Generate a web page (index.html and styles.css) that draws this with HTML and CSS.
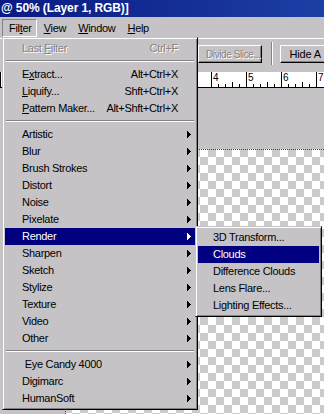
FILE: index.html
```html
<!DOCTYPE html>
<html lang="en">
<head>
  <meta charset="utf-8">
  <title>Filter menu</title>
  <link rel="stylesheet" href="styles.css">
</head>
<body>
<div class="window">
  <div class="titlebar">@ 50% (Layer 1, RGB)]</div>

  <div class="menubar">
    <span class="menubar-item open">Fil<u>t</u>er</span>
    <span class="menubar-item"><u>V</u>iew</span>
    <span class="menubar-item"><u>W</u>indow</span>
    <span class="menubar-item"><u>H</u>elp</span>
  </div>

  <div class="toolbar">
    <button class="tool-btn divide" disabled>Divide Slice...</button>
    <span class="tool-sep"></span>
    <button class="tool-btn hide">Hide A</button>
  </div>

  <div class="ruler">
    <svg width="324" height="16" viewBox="0 0 324 16">
      <rect x="0" y="0" width="324" height="16" fill="#fff"/>
      <g fill="#000">
        <rect x="0" y="0" width="1" height="16"/>
        <rect x="36" y="0" width="1" height="16"/>
        <rect x="71" y="0" width="1" height="16"/>
        <rect x="106" y="0" width="1" height="16"/>
        <rect x="141" y="0" width="1" height="16"/>
        <rect x="176" y="0" width="1" height="16"/>
        <rect x="211" y="0" width="1" height="16"/>
        <rect x="246" y="0" width="1" height="16"/>
        <rect x="281" y="0" width="1" height="16"/>
        <rect x="316" y="0" width="1" height="16"/>
        <rect x="218" y="12" width="1" height="3"/>
        <rect x="225" y="12" width="1" height="3"/>
        <rect x="232" y="10" width="1" height="5"/>
        <rect x="239" y="12" width="1" height="3"/>
        <rect x="253" y="12" width="1" height="3"/>
        <rect x="260" y="12" width="1" height="3"/>
        <rect x="267" y="10" width="1" height="5"/>
        <rect x="274" y="12" width="1" height="3"/>
        <rect x="288" y="12" width="1" height="3"/>
        <rect x="295" y="12" width="1" height="3"/>
        <rect x="302" y="10" width="1" height="5"/>
        <rect x="309" y="12" width="1" height="3"/>
        <rect x="0" y="15" width="324" height="1"/>
      </g>
      <g class="ruler-nums">
        <text x="213" y="9">4</text>
        <text x="248" y="9">5</text>
        <text x="283" y="9">6</text>
        <text x="318" y="9">7</text>
      </g>
    </svg>
  </div>

  <div class="workspace">
    <div class="canvas"></div>
  </div>

  <!-- Filter dropdown -->
  <ul class="menu filter-menu">
    <li class="item disabled"><span class="label">Last <u>F</u>ilter</span><span class="shortcut">Ctrl+F</span></li>
    <li class="sep"></li>
    <li class="item"><span class="label">E<u>x</u>tract...</span><span class="shortcut">Alt+Ctrl+X</span></li>
    <li class="item"><span class="label"><u>L</u>iquify...</span><span class="shortcut">Shft+Ctrl+X</span></li>
    <li class="item"><span class="label"><u>P</u>attern Maker...</span><span class="shortcut">Alt+Shft+Ctrl+X</span></li>
    <li class="sep"></li>
    <li class="item sub"><span class="label">Artistic</span><svg class="arrow" width="4" height="7" viewBox="0 0 4 7"><path d="M0 0h1v7h-1zM1 1h1v5h-1zM2 2h1v3h-1zM3 3h1v1h-1z"/></svg></li>
    <li class="item sub"><span class="label">Blur</span><svg class="arrow" width="4" height="7" viewBox="0 0 4 7"><path d="M0 0h1v7h-1zM1 1h1v5h-1zM2 2h1v3h-1zM3 3h1v1h-1z"/></svg></li>
    <li class="item sub"><span class="label">Brush Strokes</span><svg class="arrow" width="4" height="7" viewBox="0 0 4 7"><path d="M0 0h1v7h-1zM1 1h1v5h-1zM2 2h1v3h-1zM3 3h1v1h-1z"/></svg></li>
    <li class="item sub"><span class="label">Distort</span><svg class="arrow" width="4" height="7" viewBox="0 0 4 7"><path d="M0 0h1v7h-1zM1 1h1v5h-1zM2 2h1v3h-1zM3 3h1v1h-1z"/></svg></li>
    <li class="item sub"><span class="label">Noise</span><svg class="arrow" width="4" height="7" viewBox="0 0 4 7"><path d="M0 0h1v7h-1zM1 1h1v5h-1zM2 2h1v3h-1zM3 3h1v1h-1z"/></svg></li>
    <li class="item sub"><span class="label">Pixelate</span><svg class="arrow" width="4" height="7" viewBox="0 0 4 7"><path d="M0 0h1v7h-1zM1 1h1v5h-1zM2 2h1v3h-1zM3 3h1v1h-1z"/></svg></li>
    <li class="item sub active"><span class="label">Render</span><svg class="arrow" width="4" height="7" viewBox="0 0 4 7"><path d="M0 0h1v7h-1zM1 1h1v5h-1zM2 2h1v3h-1zM3 3h1v1h-1z"/></svg></li>
    <li class="item sub"><span class="label">Sharpen</span><svg class="arrow" width="4" height="7" viewBox="0 0 4 7"><path d="M0 0h1v7h-1zM1 1h1v5h-1zM2 2h1v3h-1zM3 3h1v1h-1z"/></svg></li>
    <li class="item sub"><span class="label">Sketch</span><svg class="arrow" width="4" height="7" viewBox="0 0 4 7"><path d="M0 0h1v7h-1zM1 1h1v5h-1zM2 2h1v3h-1zM3 3h1v1h-1z"/></svg></li>
    <li class="item sub"><span class="label">Stylize</span><svg class="arrow" width="4" height="7" viewBox="0 0 4 7"><path d="M0 0h1v7h-1zM1 1h1v5h-1zM2 2h1v3h-1zM3 3h1v1h-1z"/></svg></li>
    <li class="item sub"><span class="label">Texture</span><svg class="arrow" width="4" height="7" viewBox="0 0 4 7"><path d="M0 0h1v7h-1zM1 1h1v5h-1zM2 2h1v3h-1zM3 3h1v1h-1z"/></svg></li>
    <li class="item sub"><span class="label">Video</span><svg class="arrow" width="4" height="7" viewBox="0 0 4 7"><path d="M0 0h1v7h-1zM1 1h1v5h-1zM2 2h1v3h-1zM3 3h1v1h-1z"/></svg></li>
    <li class="item sub"><span class="label">Other</span><svg class="arrow" width="4" height="7" viewBox="0 0 4 7"><path d="M0 0h1v7h-1zM1 1h1v5h-1zM2 2h1v3h-1zM3 3h1v1h-1z"/></svg></li>
    <li class="sep"></li>
    <li class="item sub"><span class="label">&nbsp;Eye Candy 4000</span><svg class="arrow" width="4" height="7" viewBox="0 0 4 7"><path d="M0 0h1v7h-1zM1 1h1v5h-1zM2 2h1v3h-1zM3 3h1v1h-1z"/></svg></li>
    <li class="item sub"><span class="label">Digimarc</span><svg class="arrow" width="4" height="7" viewBox="0 0 4 7"><path d="M0 0h1v7h-1zM1 1h1v5h-1zM2 2h1v3h-1zM3 3h1v1h-1z"/></svg></li>
    <li class="item sub"><span class="label">HumanSoft</span><svg class="arrow" width="4" height="7" viewBox="0 0 4 7"><path d="M0 0h1v7h-1zM1 1h1v5h-1zM2 2h1v3h-1zM3 3h1v1h-1z"/></svg></li>
  </ul>

  <!-- Render submenu -->
  <ul class="menu render-menu">
    <li class="item"><span class="label">3D Transform...</span></li>
    <li class="item active"><span class="label">Clouds</span></li>
    <li class="item"><span class="label">Difference Clouds</span></li>
    <li class="item"><span class="label">Lens Flare...</span></li>
    <li class="item"><span class="label">Lighting Effects...</span></li>
  </ul>
</div>
</body>
</html>
```

FILE: styles.css
```css
body {
  margin: 0;
  font-family: 'Liberation Sans', Arial, sans-serif;
  font-size: 11px;
  letter-spacing: -0.3px;
  color: #000;
}

.window {
  position: relative;
  display: flex;
  flex-direction: column;
  width: 324px;
  height: 414px;
  overflow: hidden;
  background-color: #c6c3c6;
}

/* title bar */
.titlebar {
  height: 17px;
  line-height: 17px;
  padding-left: 1px;
  color: #fff;
  font-size: 12px;
  font-weight: bold;
  letter-spacing: -0.1px;
  white-space: nowrap;
  background: linear-gradient(to right, #0a1a84, #1c3fa6);
}

/* menu bar */
.menubar {
  display: flex;
  align-items: flex-start;
  height: 21px;
  padding: 2px 0 0 2px;
  box-sizing: border-box;
}

.menubar-item {
  height: 18px;
  line-height: 16px;
  padding: 0 4px 0 6px;
  box-sizing: border-box;
  border: 1px solid transparent;
}

.menubar-item.open {
  border-color: #848284 #fff #fff #848284;
}

u {
  text-underline-offset: 1px;
}

/* toolbar */
.toolbar {
  display: flex;
  align-items: flex-start;
  height: 26px;
  padding: 6px 0 0 198px;
  box-sizing: border-box;
  border-top: 1px solid #fff;
}

.tool-btn {
  height: 18px;
  padding: 0;
  font-family: 'Liberation Sans', Arial, sans-serif;
  font-size: 10px;
  letter-spacing: -0.4px;
  line-height: 15px;
  text-align: left;
  white-space: nowrap;
  background-color: #c6c3c6;
  border: 1px solid;
  border-color: #fff #000 #000 #fff;
  box-shadow: inset -1px -1px #848284;
  color: #000;
}

.tool-btn.divide {
  width: 74px;
  padding-left: 7px;
  color: #848284;
  text-shadow: 1px 1px 0 #fff;
}

.tool-btn.hide {
  flex-shrink: 0;
  width: 60px;
  margin-left: 7px;
  padding-left: 9px;
  font-size: 11px;
  letter-spacing: -0.2px;
}

.tool-sep {
  width: 1px;
  height: 23px;
  margin: -3px 0 0 9px;
  border-left: 1px solid #848284;
  border-right: 1px solid #fff;
}

/* ruler */
.ruler {
  height: 16px;
  margin-top: 8px;
}

.ruler svg {
  display: block;
}

.ruler-nums text {
  font-family: 'Liberation Sans', Arial, sans-serif;
  font-size: 10px;
  fill: #000;
}

/* workspace + canvas */
.workspace {
  flex: 1;
  display: flex;
  padding: 61px 0 0 65px;
}

.canvas {
  flex: 1;
  border-top: 1px dotted #1f2cff;
  border-left: 1px dotted #1f2cff;
  background-image: conic-gradient(#cbcbcb 25%, #fff 0 50%, #cbcbcb 0 75%, #fff 0);
  background-size: 16px 16px;
  background-position: 14px 7px;
}

/* dropdown menus */
.menu {
  position: absolute;
  margin: 0;
  padding: 2px;
  list-style: none;
  box-sizing: border-box;
  background-color: #c6c3c6;
  border: 1px solid;
  border-color: #c6c3c6 #000 #000 #c6c3c6;
  box-shadow: inset 1px 1px #fff, inset -1px -1px #848284;
}

.filter-menu {
  left: 2px;
  top: 37px;
  width: 196px;
}

.render-menu {
  left: 195px;
  top: 226px;
  width: 127px;
}

.item {
  display: flex;
  align-items: center;
  height: 17px;
  line-height: 17px;
  padding: 0 17px;
  white-space: nowrap;
}

.item .label {
  flex: 1;
}

.filter-menu .item.sub {
  padding-right: 4px;
}

.render-menu .item {
  padding-left: 15px;
}

.item.active {
  background-color: #000080;
  color: #fff;
}

.item.disabled {
  color: #848284;
  text-shadow: 1px 1px 0 #fff;
}

.arrow {
  display: block;
  fill: currentColor;
}

.sep {
  height: 2px;
  margin: 3px 1px 4px;
  box-sizing: border-box;
  border-top: 1px solid #848284;
  border-bottom: 1px solid #fff;
}
```
